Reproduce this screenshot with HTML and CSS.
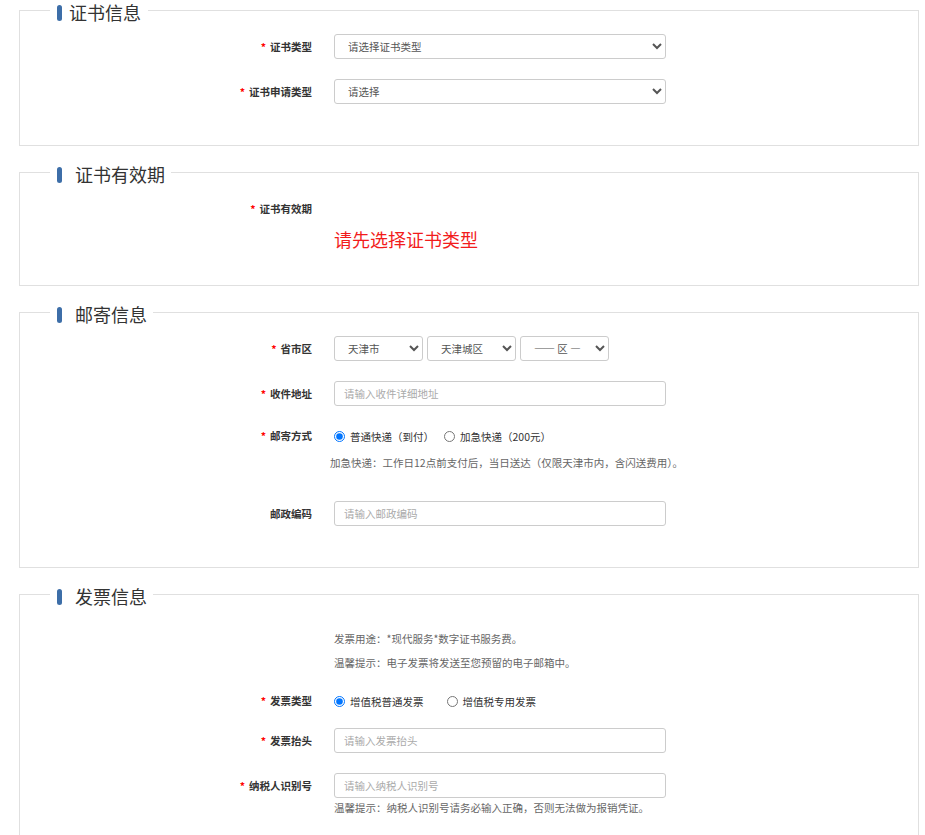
FILE: index.html
```html
<!DOCTYPE html>
<html lang="zh-CN">
<head>
<meta charset="utf-8">
<title>证书申请</title>
<link rel="stylesheet" href="styles.css">
</head>
<body>
<div class="page">

  <fieldset class="box">
    <legend class="box-title box-title-tight"><span class="bar"></span><span class="title-text">证书信息</span></legend>
    <div class="row">
      <label class="lbl"><span class="req">*</span>证书类型</label>
      <select class="sel sel-wide"><option>请选择证书类型</option></select>
    </div>
    <div class="row gap20">
      <label class="lbl"><span class="req">*</span>证书申请类型</label>
      <select class="sel sel-wide"><option>请选择</option></select>
    </div>
  </fieldset>

  <fieldset class="box box-validity">
    <legend class="box-title"><span class="bar"></span><span class="title-text">证书有效期</span></legend>
    <div class="row">
      <label class="lbl"><span class="req">*</span>证书有效期</label>
      <span></span>
    </div>
    <div class="row gap5">
      <span></span>
      <div class="warn">请先选择证书类型</div>
    </div>
  </fieldset>

  <fieldset class="box">
    <legend class="box-title"><span class="bar"></span><span class="title-text">邮寄信息</span></legend>
    <div class="row">
      <label class="lbl"><span class="req">*</span>省市区</label>
      <div class="sel-group">
        <select class="sel sel-small"><option>天津市</option></select>
        <select class="sel sel-small"><option>天津城区</option></select>
        <select class="sel sel-small"><option>—— 区 —</option></select>
      </div>
    </div>
    <div class="row gap20">
      <label class="lbl"><span class="req">*</span>收件地址</label>
      <input class="inp" type="text" placeholder="请输入收件详细地址">
    </div>
    <div class="row row-radio gap20">
      <label class="lbl"><span class="req">*</span>邮寄方式</label>
      <div class="radio-group">
        <label class="opt opt-mail"><input class="rad" type="radio" name="mail" checked><span>普通快递（到付）</span></label>
        <label class="opt"><input class="rad" type="radio" name="mail"><span>加急快递（200元）</span></label>
      </div>
    </div>
    <div class="row row-text gap9">
      <span></span>
      <div class="hint hint-shift">加急快递：工作日12点前支付后，当日送达（仅限天津市内，含闪送费用）。</div>
    </div>
    <div class="row gap30">
      <label class="lbl">邮政编码</label>
      <input class="inp" type="text" placeholder="请输入邮政编码">
    </div>
  </fieldset>

  <fieldset class="box">
    <legend class="box-title"><span class="bar"></span><span class="title-text">发票信息</span></legend>
    <div class="row row-text gap13">
      <span></span>
      <div class="hint">发票用途：*现代服务*数字证书服务费。</div>
    </div>
    <div class="row row-text gap8">
      <span></span>
      <div class="hint">温馨提示：电子发票将发送至您预留的电子邮箱中。</div>
    </div>
    <div class="row row-radio gap20">
      <label class="lbl"><span class="req">*</span>发票类型</label>
      <div class="radio-group">
        <label class="opt opt-invoice"><input class="rad" type="radio" name="inv" checked><span>增值税普通发票</span></label>
        <label class="opt"><input class="rad" type="radio" name="inv"><span>增值税专用发票</span></label>
      </div>
    </div>
    <div class="row gap17">
      <label class="lbl"><span class="req">*</span>发票抬头</label>
      <input class="inp" type="text" placeholder="请输入发票抬头">
    </div>
    <div class="row gap20">
      <label class="lbl"><span class="req">*</span>纳税人识别号</label>
      <input class="inp" type="text" placeholder="请输入纳税人识别号">
    </div>
    <div class="row row-text gap2">
      <span></span>
      <div class="hint">温馨提示：纳税人识别号请务必输入正确，否则无法做为报销凭证。</div>
    </div>
  </fieldset>

</div>
</body>
</html>
```

FILE: styles.css
```css
* {
  box-sizing: border-box;
}

body {
  margin: 0;
  background: #fff;
  font-family: "Noto Sans CJK SC", "Microsoft YaHei", sans-serif;
  color: #333;
}

.page {
  width: 900px;
  margin-left: 19px;
}

.box {
  border: 1px solid #e0e0e0;
  margin: 0 0 16px 0;
  padding: 13px 0 41px 0;
  min-width: 0;
}

.box-validity {
  padding-bottom: 34px;
}

.box-title {
  margin-left: 30px;
  padding: 4px 6px 0 7px;
  height: 21px;
  display: flex;
  align-items: center;
  gap: 13px;
  font-size: 18px;
  line-height: 17px;
  color: #333;
}

.box-title-tight {
  gap: 7px;
  padding-right: 7px;
}

.bar {
  display: block;
  width: 5px;
  height: 16px;
  border-radius: 3px;
  background: #3d6ea8;
}

.row {
  display: grid;
  grid-template-columns: 292px 332px;
  column-gap: 22px;
  align-items: center;
  min-height: 25px;
}

.row-radio {
  min-height: 20px;
}

.row-text {
  min-height: 16px;
}

.gap2 { margin-top: 2px; }
.gap5 { margin-top: 5px; }
.gap8 { margin-top: 8px; }
.gap9 { margin-top: 9px; }
.gap13 { margin-top: 13px; }
.gap17 { margin-top: 17px; }
.gap20 { margin-top: 20px; }
.gap30 { margin-top: 30px; }

.lbl {
  text-align: right;
  font-size: 10.5px;
  font-weight: bold;
  line-height: 20px;
  color: #333;
}

.req {
  color: #f00;
  margin-right: 4px;
}

.sel,
.inp {
  height: 25px;
  border: 1px solid #ccc;
  border-radius: 3px;
  background: #fff;
  font-family: "Noto Sans CJK SC", "Microsoft YaHei", sans-serif;
  font-size: 10.5px;
  color: #555;
  padding: 0 0 0 9px;
  margin: 0;
  outline: none;
}

.sel-wide,
.inp {
  width: 332px;
}

.inp::placeholder {
  color: #aaa;
}

.sel-group {
  display: flex;
  gap: 4px;
}

.sel-small {
  width: 89px;
}

.warn {
  font-size: 18px;
  line-height: 24px;
  color: #f21c1c;
}

.radio-group {
  display: flex;
  align-items: center;
  height: 20px;
  font-size: 10.5px;
  color: #333;
  white-space: nowrap;
}

.opt {
  display: flex;
  align-items: center;
  gap: 5px;
}

.opt-mail {
  margin-right: 10px;
}

.opt-invoice {
  margin-right: 23px;
}

.rad {
  width: 11px;
  height: 11px;
  margin: 0;
}

.hint {
  font-size: 10.5px;
  line-height: 16px;
  color: #666;
  white-space: nowrap;
}

.hint-shift {
  margin-left: -4px;
}
```
